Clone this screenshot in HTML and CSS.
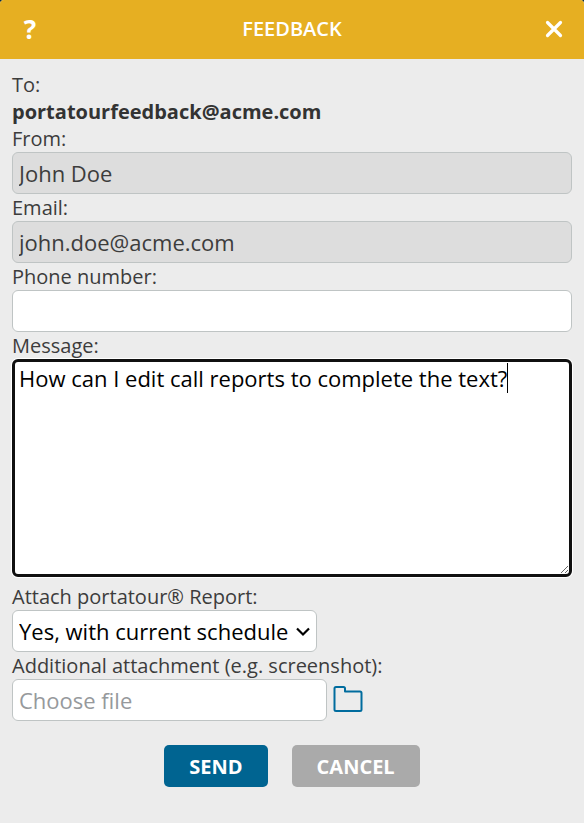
FILE: index.html
```
<!DOCTYPE html>
<html lang="en">
<head>
<meta charset="utf-8">
<meta name="viewport" content="width=device-width, initial-scale=1">
<title>Feedback</title>
<link rel="stylesheet" href="styles.css">
</head>
<body>
<main class="dialog">
  <header class="dialog-header">
    <button class="header-button help" type="button" aria-label="Help">?</button>
    <h1 class="title">FEEDBACK</h1>
    <button class="header-button" type="button" aria-label="Close">
      <svg width="18" height="18" viewBox="0 0 18 18" fill="none" stroke="currentColor" stroke-width="3.2" stroke-linecap="round"><path d="M2.500 2.500 15.500 15.500M15.500 2.500 2.500 15.500"/></svg>
    </button>
  </header>
  <form class="form">
    <div class="line">To:</div>
    <div class="line recipient">portatourfeedback@acme.com</div>
    <label class="line" for="from">From:</label>
    <input class="field" id="from" type="text" value="John Doe" disabled>
    <label class="line" for="email">Email:</label>
    <input class="field" id="email" type="email" value="john.doe@acme.com" disabled>
    <label class="line" for="phone">Phone number:</label>
    <input class="field" id="phone" type="tel">
    <label class="line" for="message">Message:</label>
    <div class="message-box">
      <textarea class="message" id="message" spellcheck="false">How can I edit call reports to complete the text?</textarea>
      <span class="caret"></span>
    </div>
    <label class="line" for="report">Attach portatour® Report:</label>
    <div class="select-box">
      <select class="field select" id="report"><option>Yes, with current schedule</option></select>
      <svg class="chevron" width="14" height="10" viewBox="0 0 14 10" fill="none" stroke="currentColor" stroke-width="2.2"><path d="M1 1.5 7 7.5 13 1.5"/></svg>
    </div>
    <label class="line" for="file">Additional attachment (e.g. screenshot):</label>
    <div class="file-row">
      <input class="field file" id="file" type="text" placeholder="Choose file">
      <button class="browse" type="button" aria-label="Browse">
        <svg width="30" height="28" viewBox="0 0 30 28" fill="none" stroke="currentColor" stroke-width="2" stroke-linejoin="round"><path d="M3 1H10.500Q12 1 12 2.500V5.500H27Q28.500 5.500 28.500 7V23.500Q28.500 25 27 25H3Q1.500 25 1.500 23.500V2.500Q1.500 1 3 1Z"/></svg>
      </button>
    </div>
    <div class="actions">
      <button class="action send" type="button">SEND</button>
      <button class="action cancel" type="button">CANCEL</button>
    </div>
  </form>
</main>
</body>
</html>
```
FILE: styles.css
```
* {
  box-sizing: border-box;
}

body {
  margin: 0;
  background: #0b2b3c;
  color: #3c3c3c;
  font-family: "Open Sans", sans-serif;
  font-size: 20px;
  line-height: 27px;
}

button,
input,
select,
textarea {
  margin: 0;
  font-family: inherit;
}

.dialog {
  min-height: 100vh;
  overflow: hidden;
  border-radius: 4px 4px 0 0;
  background: #ececec;
}

.dialog-header {
  display: flex;
  align-items: center;
  justify-content: space-between;
  height: 59px;
  padding: 0 10px 2px;
  background: #e6af22;
  color: #fff;
}

.header-button {
  display: flex;
  align-items: center;
  justify-content: center;
  width: 40px;
  height: 40px;
  padding: 0;
  border: 0;
  background: none;
  color: inherit;
}

.help {
  font-size: 26px;
  font-weight: 700;
}

.title {
  margin: 0;
  font-size: 20px;
  font-weight: 600;
  line-height: 27px;
}

.form {
  padding: 12px;
}

.line {
  display: block;
}

.recipient {
  color: #333;
  font-weight: 700;
}

.field {
  display: block;
  width: 100%;
  height: 42px;
  padding: 0 6px;
  border: 1px solid #bfc4c4;
  border-radius: 6px;
  background: #fff;
  color: #000;
  font-size: 22px;
}

.field:disabled {
  background: #ddd;
  color: #3c3c3c;
}

.field::placeholder {
  color: #96999c;
}

.message-box {
  position: relative;
  margin-bottom: 6px;
}

.message {
  display: block;
  width: 100%;
  height: 218px;
  padding: 1px 4px;
  border: 3px solid #101010;
  border-radius: 6px;
  outline: 0;
  box-shadow: 0 0 0 1px #fff;
  background: #fff;
  color: #000;
  font-size: 22px;
  line-height: 30px;
}

.caret {
  position: absolute;
  top: 4px;
  left: 495px;
  width: 1px;
  height: 30px;
  background: #000;
}

.select-box {
  position: relative;
  width: fit-content;
}

.select {
  width: auto;
  padding-right: 27px;
  appearance: none;
}

.chevron {
  position: absolute;
  top: 17px;
  right: 7px;
  color: #000;
  pointer-events: none;
}

.file-row {
  display: flex;
  align-items: center;
  gap: 6px;
}

.file {
  width: 315px;
}

.browse {
  display: flex;
  padding: 0;
  border: 0;
  background: none;
  color: #006c9e;
}

.actions {
  display: flex;
  justify-content: center;
  gap: 24px;
  margin-top: 24px;
}

.action {
  height: 42px;
  padding: 0 25px;
  border: 0;
  border-radius: 5px;
  color: #fff;
  font-size: 20px;
  font-weight: 700;
}

.send {
  background: #006491;
}

.cancel {
  background: #aaa;
}
```
